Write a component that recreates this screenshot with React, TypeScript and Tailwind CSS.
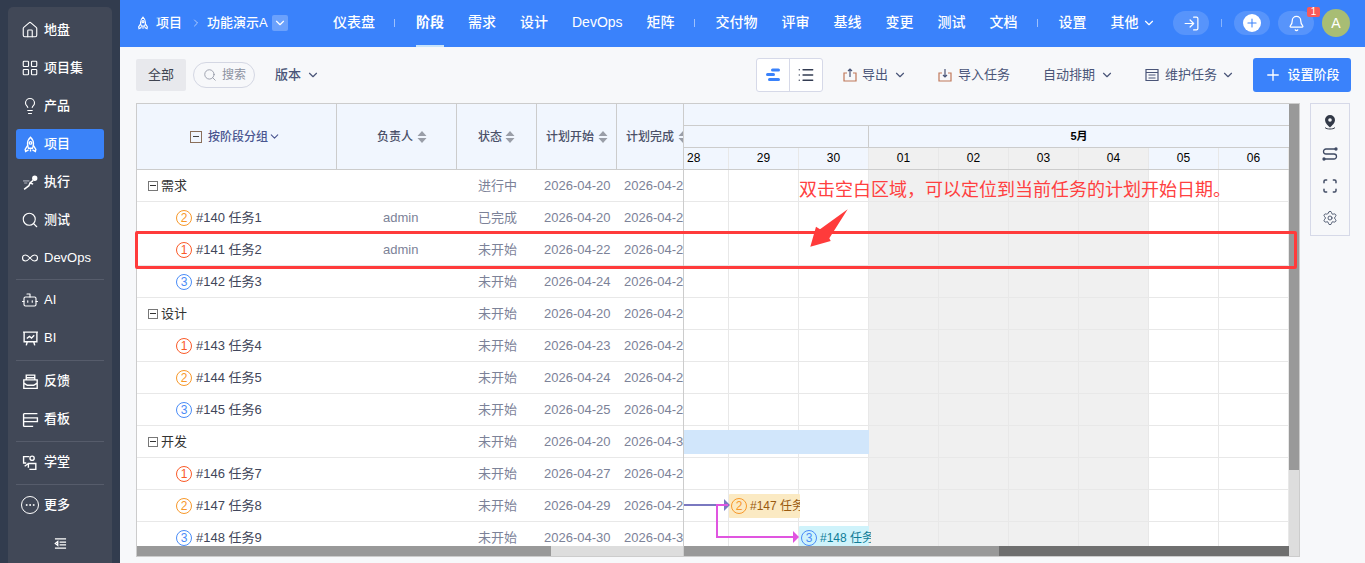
import React from 'react'
import {
  Bell,
  Bot,
  ChevronDown,
  ChevronRight,
  Ellipsis,
  Home,
  Infinity as InfinityIcon,
  LayoutGrid,
  Lightbulb,
  List,
  LogIn,
  Plus,
  Scan,
  Search,
  Settings,
} from 'lucide-react'

const Rocket = ({ className = 'h-[17px] w-[17px]' }: { className?: string }) => (
  <svg viewBox="0 0 16 16" fill="none" stroke="currentColor" strokeWidth="1.3" className={className}>
    <path d="M8 1.2c2 1.8 2.8 4 2.8 6.2 0 1.6-.4 3-.9 4.1H6.100c-.5-1.100-.9-2.500-.9-4.100C5.200 5.200 6 3 8 1.200z" />
    <circle cx="8" cy="6.500" r="1.200" />
    <path d="M5.500 8.500 3 12.500l.4 2 2.800-1.500M10.500 8.500l2.500 4-.4 2-2.800-1.500M8 12.500v2" />
  </svg>
)

const Runner = () => (
  <svg viewBox="0 0 16 16" fill="none" stroke="currentColor" strokeWidth="1.4" className="h-[17px] w-[17px]">
    <circle cx="12" cy="4" r="1.800" fill="currentColor" />
    <path d="M2 14.500 6.500 11l1-2.500 3-2.500M7.500 8.500l3 1" />
    <path d="M1 6.500h6M2 8.500h3" stroke="#8a8f9c" strokeWidth="1.500" />
  </svg>
)

const Feedback = () => (
  <svg viewBox="0 0 16 16" fill="none" stroke="currentColor" strokeWidth="1.300" className="h-[17px] w-[17px]">
    <path d="M4 6V2h8v4M1.700 6.500h12.600v8H1.700zM4.500 4.500h7M1.700 9.500 5 11.500h6l3.300-2" />
  </svg>
)

const Board = () => (
  <svg viewBox="0 0 16 16" fill="none" stroke="currentColor" strokeWidth="1.300" className="h-[17px] w-[17px]">
    <path d="M1.500 2.500h13M1.500 2.500v12M1.500 6.500h13v3.500h-13M1.500 14.500h9" />
  </svg>
)

const School = () => (
  <svg viewBox="0 0 16 16" fill="none" stroke="currentColor" strokeWidth="1.300" className="h-[17px] w-[17px]">
    <circle cx="9.500" cy="4" r="2" />
    <path d="M7 2.500H1.500v6H4M6 13V9h7v5.500H7M2.500 11.500 6 9" />
  </svg>
)

const Screen = () => (
  <svg viewBox="0 0 16 16" fill="none" stroke="currentColor" strokeWidth="1.300" className="h-[17px] w-[17px]">
    <path d="M1 2h14M2 2v9h12V2M5 11l-1 3.500M11 11l1 3.500M4.500 8 7 6l2 1.500L11.500 5" />
  </svg>
)

type NavItem = { label: string; icon: React.ReactNode; active?: boolean }

const navGroups: NavItem[][] = [
  [
    { label: '地盘', icon: <Home size={18} strokeWidth={1.5} /> },
    { label: '项目集', icon: <LayoutGrid size={18} strokeWidth={1.5} /> },
    { label: '产品', icon: <Lightbulb size={18} strokeWidth={1.5} /> },
    { label: '项目', icon: <Rocket />, active: true },
    { label: '执行', icon: <Runner /> },
    { label: '测试', icon: <Search size={18} strokeWidth={1.5} /> },
    { label: 'DevOps', icon: <InfinityIcon size={18} strokeWidth={1.5} /> },
  ],
  [
    { label: 'AI', icon: <Bot size={18} strokeWidth={1.5} /> },
    { label: 'BI', icon: <Screen /> },
  ],
  [
    { label: '反馈', icon: <Feedback /> },
    { label: '看板', icon: <Board /> },
  ],
  [{ label: '学堂', icon: <School /> }],
]

function Sidebar() {
  return (
    <aside className="h-full w-[120px] shrink-0 bg-[#323c4e] pl-2 pr-2 pt-[7px]">
      <div className="flex h-full flex-col rounded-t-[5px] bg-[#414857] px-2 pt-2 text-white">
        {navGroups.map((group, i) => (
          <React.Fragment key={i}>
            <div className="flex flex-col gap-2">
              {group.map(item => (
                <div
                  key={item.label}
                  className={`flex h-[30px] items-center gap-[5px] rounded-[3px] pl-[5px] text-[13px] font-medium ${item.active ? 'bg-[#3a82f8]' : ''}`}
                >
                  <span className="flex w-[18px] justify-center">{item.icon}</span>
                  <span>{item.label}</span>
                </div>
              ))}
            </div>
            <div className={`mb-[5px] h-px bg-[#565c6b] ${i === 0 ? 'mt-[6px]' : 'mt-[7px]'}`} />
          </React.Fragment>
        ))}
        <div className="flex h-[30px] items-center gap-[5px] pl-[5px] text-[13px] font-medium">
          <span className="flex h-[18px] w-[18px] items-center justify-center rounded-full border border-white">
            <Ellipsis size={12} />
          </span>
          <span>更多</span>
        </div>
        <div className="mt-[8px] flex h-[30px] items-center justify-center">
          <svg viewBox="0 0 14 14" fill="none" stroke="currentColor" strokeWidth="1.500" className="h-[13px] w-[13px]">
            <path d="M1 2h12M6 5.500h7M6 8.500h7M1 12h12M4 5 1.500 7 4 9z" />
          </svg>
        </div>
      </div>
    </aside>
  )
}

type TopItem = { label: string; active?: boolean } | 'sep'

const topItems: TopItem[] = [
  { label: '仪表盘' },
  'sep',
  { label: '阶段', active: true },
  { label: '需求' },
  { label: '设计' },
  { label: 'DevOps' },
  { label: '矩阵' },
  'sep',
  { label: '交付物' },
  { label: '评审' },
  { label: '基线' },
  { label: '变更' },
  { label: '测试' },
  { label: '文档' },
  'sep',
  { label: '设置' },
]

function TopBar() {
  return (
    <header className="flex h-[47px] shrink-0 items-center bg-[#3a82fb] text-white">
      <div className="flex w-[213px] shrink-0 items-center pb-[1px] pl-[16px] text-[13px] font-medium">
        <Rocket className="h-[14px] w-[14px]" />
        <span className="ml-[6px]">项目</span>
        <ChevronRight size={12} strokeWidth={2} className="ml-[8px] text-white/60" />
        <span className="ml-[5px]">功能演示A</span>
        <span className="ml-[4px] flex h-4 w-4 items-center justify-center rounded-[2px] bg-white/25">
          <ChevronDown size={14} />
        </span>
      </div>
      <nav className="flex h-full items-center gap-[24px] text-[14px] font-medium">
        {topItems.map((item, i) =>
          item === 'sep' ? (
            <span key={i} className="-ml-[5px] -mr-[3px] mb-[2px] h-[8px] w-px bg-white/50" />
          ) : (
            <span key={item.label} className={`relative flex h-full items-center pb-[2px] ${item.active ? 'font-bold' : ''}`}>
              {item.label}
              {item.active && <span className="absolute bottom-0 left-0 right-0 h-[2px] bg-[#c8e4fa]" />}
            </span>
          ),
        )}
        <span className="flex items-center gap-[3px] pb-[2px]">
          其他
          <ChevronDown size={14} />
        </span>
      </nav>
      <div className="ml-auto flex items-center pb-[1px] pr-[15px]">
        <span className="flex h-6 w-9 items-center justify-center rounded-full bg-white/15">
          <LogIn size={17} strokeWidth={1.7} />
        </span>
        <span className="ml-[12px] h-[8px] w-px bg-white/40" />
        <span className="ml-[12px] flex h-6 w-9 items-center justify-center rounded-full bg-white/15">
          <span className="flex h-[18px] w-[18px] items-center justify-center rounded-full bg-white text-[#3a82fb]">
            <Plus size={14} strokeWidth={1.8} />
          </span>
        </span>
        <span className="relative ml-[8px] flex h-6 w-9 items-center justify-center rounded-full bg-white/15">
          <Bell size={17} strokeWidth={1.8} />
          <span className="absolute -top-[4px] right-[-6px] flex h-[10px] w-[13px] items-center justify-center rounded-[2px] bg-[#f85a5a] text-[10px] leading-none">
            1
          </span>
        </span>
        <span className="ml-[8px] flex h-7 w-7 items-center justify-center rounded-full bg-[#a8bd74] text-[14px]">
          A
        </span>
      </div>
    </header>
  )
}

const BoxIcon = ({ up }: { up?: boolean }) => (
  <svg viewBox="0 0 14 14" fill="none" strokeWidth="1.200" className="h-[14px] w-[14px]">
    <path d="M4 5H1v8h12V5h-3" stroke="#c0785a" />
    <path d={up ? 'M7 9V1M5 3l2-2 2 2' : 'M7 1v8M5 7l2 2 2-2'} stroke="#4a5578" />
  </svg>
)

function ToolBar() {
  return (
    <div className="flex h-[34px] shrink-0 items-center text-[13px] text-[#4a5578]">
      <span className="flex h-8 w-[50px] items-center justify-center rounded-[2px] bg-[#e8e9ed] text-[#3f4450]">全部</span>
      <span className="ml-[7px] flex h-[26px] w-[62px] items-center gap-[5px] rounded-full border border-[#d4d7e3] pl-[9px] text-[12px] text-[#8d92a1]">
        <Search size={14} strokeWidth={1.4} />
        搜索
      </span>
      <span className="ml-[20px] font-medium">版本</span>
      <ChevronDown size={14} className="ml-[5px]" />

      <span className="ml-auto flex h-[34px] w-[67px] rounded-[3px] border border-[#d6d9e8] bg-white">
        <span className="flex w-[33px] items-center justify-center border-r border-[#d6d9e8]">
          <svg viewBox="0 0 16 14" className="h-[14px] w-4" fill="#3a82fb">
            <rect x="6" y="0.500" width="9" height="3" rx="1.500" />
            <rect x="1" y="5" width="9" height="3" rx="1.500" />
            <rect x="3" y="10" width="12" height="3" rx="1.500" />
          </svg>
        </span>
        <span className="flex flex-1 items-center justify-center text-[#333c52]">
          <List size={18} strokeWidth={1.7} />
        </span>
      </span>
      <span className="ml-[20px] flex items-center">
        <BoxIcon up />
        <span className="ml-[5px]">导出</span>
        <ChevronDown size={14} className="ml-[5px]" />
      </span>
      <span className="ml-[31px] flex items-center">
        <BoxIcon />
        <span className="ml-[6px]">导入任务</span>
      </span>
      <span className="ml-[33px] flex items-center">
        自动排期
        <ChevronDown size={14} className="ml-[5px]" />
      </span>
      <span className="ml-[31px] flex items-center">
        <svg viewBox="0 0 14 14" fill="none" stroke="currentColor" strokeWidth="1.200" className="h-[14px] w-[14px]">
          <path d="M1 1.500h12v11H1zM1 4.500h12M3.500 7h7M3.500 10h7" />
        </svg>
        <span className="ml-[6px]">维护任务</span>
        <ChevronDown size={14} className="ml-[4px]" />
      </span>
      <span className="ml-[18px] flex h-[34px] w-[98px] items-center justify-center gap-[5px] rounded-[3px] bg-[#3a82fb] font-medium text-white">
        <Plus size={18} strokeWidth={1.8} />
        设置阶段
      </span>
    </div>
  )
}

type Row = {
  group?: boolean
  name: string
  pri?: 1 | 2 | 3
  owner?: string
  status: string
  start: string
  end: string
}

// the 计划完成 column is cut at the gantt edge, so only the part on screen is listed
const rows: Row[] = [
  { group: true, name: '需求', status: '进行中', start: '2026-04-20', end: '2026-04-2' },
  { name: '#140 任务1', pri: 2, owner: 'admin', status: '已完成', start: '2026-04-20', end: '2026-04-2' },
  { name: '#141 任务2', pri: 1, owner: 'admin', status: '未开始', start: '2026-04-22', end: '2026-04-2' },
  { name: '#142 任务3', pri: 3, status: '未开始', start: '2026-04-24', end: '2026-04-2' },
  { group: true, name: '设计', status: '未开始', start: '2026-04-20', end: '2026-04-2' },
  { name: '#143 任务4', pri: 1, status: '未开始', start: '2026-04-23', end: '2026-04-2' },
  { name: '#144 任务5', pri: 2, status: '未开始', start: '2026-04-24', end: '2026-04-2' },
  { name: '#145 任务6', pri: 3, status: '未开始', start: '2026-04-25', end: '2026-04-2' },
  { group: true, name: '开发', status: '未开始', start: '2026-04-20', end: '2026-04-3' },
  { name: '#146 任务7', pri: 1, status: '未开始', start: '2026-04-27', end: '2026-04-2' },
  { name: '#147 任务8', pri: 2, status: '未开始', start: '2026-04-29', end: '2026-04-2' },
  { name: '#148 任务9', pri: 3, status: '未开始', start: '2026-04-30', end: '2026-04-3' },
]

function Priority({ level }: { level: 1 | 2 | 3 }) {
  const color = level === 1 ? 'border-[#fa5a28] text-[#fa5a28]' : level === 2 ? 'border-[#f7982a] text-[#f7982a]' : 'border-[#4a8cf7] text-[#4a8cf7]'
  return (
    <span className={`flex h-4 w-4 shrink-0 items-center justify-center rounded-full border text-[12px] leading-none ${color}`}>
      {level}
    </span>
  )
}

const SortIcon = () => (
  <svg viewBox="0 0 10 14" className="h-[14px] w-[10px] shrink-0" fill="#9a9ea8">
    <path d="M5 1 9.500 6H.500zM5 13 .500 8h9z" />
  </svg>
)

const Toggle = () => (
  <span className="flex h-[10px] w-[10px] shrink-0 items-center justify-center border border-[#777] bg-white">
    <span className="h-px w-[6px] bg-[#333]" />
  </span>
)

function LeftTable() {
  return (
    <div className="w-[547px] shrink-0 border-r border-[#ccc]">
      <div className="flex h-[66px] border-b border-[#ccc] bg-[#f1f6fe] text-[12px] font-medium text-[#4a5068]">
        <div className="flex w-[200px] items-center border-r border-[#ccc] pl-[53px] text-[#4a5590]">
          <span className="flex h-3 w-3 items-center justify-center border border-[#8a6f5a]">
            <span className="h-px w-[6px] bg-[#444]" />
          </span>
          <span className="ml-[6px]">按阶段分组</span>
          <ChevronDown size={13} />
        </div>
        <div className="flex w-[120px] items-center border-r border-[#ccc] pl-[40px]">
          负责人
          <span className="ml-[4px]"><SortIcon /></span>
        </div>
        <div className="flex w-[80px] items-center border-r border-[#ccc] pl-[21px]">
          状态
          <span className="ml-[3px]"><SortIcon /></span>
        </div>
        <div className="flex w-[80px] items-center border-r border-[#ccc] pl-[9px]">
          计划开始
          <span className="ml-[4px]"><SortIcon /></span>
        </div>
        <div className="flex w-[66px] items-center overflow-hidden pl-[9px]">
          <span className="shrink-0">计划完成</span>
          <span className="ml-[4px]"><SortIcon /></span>
        </div>
      </div>
      {rows.map(row => (
        <div key={row.name} className="flex h-8 items-center border-b border-[#e8e8e8] text-[13px] text-[#7c8298]">
          <div className="flex w-[200px] items-center text-[#41465a]">
            {row.group ? (
              <span className="flex items-center gap-[3px] pl-[11px] text-[#333]">
                <Toggle />
                {row.name}
              </span>
            ) : (
              <span className="flex items-center gap-[4px] pl-[39px]">
                {row.pri && <Priority level={row.pri} />}
                {row.name}
              </span>
            )}
          </div>
          <div className="w-[120px] pl-[46px]">{row.owner}</div>
          <div className="w-[80px] pl-[21px]">{row.status}</div>
          <div className="w-[80px] pl-[7px]">{row.start}</div>
          <div className="w-[66px] whitespace-nowrap pl-[7px]">{row.end}</div>
        </div>
      ))}
    </div>
  )
}

const days = ['28', '29', '30', '01', '02', '03', '04', '05', '06']
const isOff = (d: string) => ['01', '02', '03', '04'].includes(d)

function Gantt() {
  return (
    <div className="relative w-[605px] shrink-0 overflow-hidden">
      <div className="h-[22px] border-b border-[#ccc] bg-[#f1f6fe]" />
      <div className="flex h-[22px] border-b border-[#ccc] bg-[#f1f6fe]">
        <div className="w-[185px] border-r border-[#ccc]" />
        <div className="flex-1 text-center text-[11px] font-bold leading-[21px] text-black">5月</div>
      </div>
      <div className="flex h-[22px] border-b border-[#ccc] text-[12px] leading-[21px] text-black">
        {days.map((d, i) => (
          <div
            key={d}
            className={`shrink-0 border-r border-[#e8e8e8] ${i === 0 ? 'w-[45px] pl-[3px]' : 'w-[70px] text-center'} ${isOff(d) ? 'bg-[#f0f0f0]' : 'bg-[#f1f6fe]'}`}
          >
            {d}
          </div>
        ))}
      </div>
      {rows.map(row => (
        <div key={row.name} className="flex h-8">
          {days.map((d, i) => (
            <div
              key={d}
              className={`shrink-0 border-b border-r border-[#e8e8e8] ${i === 0 ? 'w-[45px]' : 'w-[70px]'} ${isOff(d) ? 'bg-[#f0f0f0]' : 'bg-white'}`}
            />
          ))}
        </div>
      ))}

      {/* bars sit over the day grid */}
      <div className="absolute left-0 top-[326px] h-6 w-[185px] bg-[#d1e6fb]" />
      <div className="absolute left-[45px] top-[390px] flex h-6 w-[71px] items-center gap-[3px] overflow-hidden whitespace-nowrap rounded-[1px] bg-[#fbeac3] pl-[2px] text-[12px] text-[#9a5a10]">
        <Priority level={2} />
        #147 任务8
      </div>
      <div className="absolute left-[115px] top-[422px] flex h-6 w-[72px] items-center gap-[3px] overflow-hidden whitespace-nowrap rounded-[1px] pl-[2px] text-[12px] text-[#0f7d98]">
        <span className="absolute inset-y-0 left-0 w-[70px] bg-[#cff3fb]" />
        <span className="relative"><Priority level={3} /></span>
        <span className="relative">#148 任务9</span>
      </div>
      <svg className="absolute left-0 top-[390px] h-[60px] w-[120px]" viewBox="0 0 120 60" fill="none">
        <path d="M0 11h40" stroke="#7a78c0" strokeWidth="2" />
        <path d="M40 5l6 6-6 6z" fill="#7a78c0" />
        <path d="M44 11H33v32h77" stroke="#e055e0" strokeWidth="2" />
        <path d="M109 37l6 6-6 6z" fill="#e055e0" />
      </svg>
    </div>
  )
}

function Scrollbars() {
  return (
    <div className="flex h-[10px] shrink-0">
      <div className="flex w-[547px] shrink-0 border-r border-[#ccc] bg-[#ddd]">
        <div className="w-[414px] bg-[#999]" />
      </div>
      <div className="flex w-[605px] shrink-0 bg-[#999]">
        <div className="ml-[315px] flex-1 bg-[#6f6f6f]" />
      </div>
      <div className="flex-1 bg-[#ddd]" />
    </div>
  )
}

function SideTools() {
  return (
    <div className="ml-[10px] flex h-[133px] w-[40px] shrink-0 flex-col items-center gap-[16px] border border-[#d6d9e8] pt-[10px] text-[#3f4a63]">
      <svg viewBox="0 0 16 16" className="h-4 w-4" fill="#333a48">
        <path d="M8 1a5 5 0 0 0-5 5c0 3 3 5.500 5 7.500 2-2 5-4.500 5-7.500a5 5 0 0 0-5-5z" />
        <circle cx="8" cy="6" r="1.800" fill="#f7f8fa" />
        <path d="M3 13.500c1 1.200 3 1.500 5 1.500s4-.3 5-1.500" stroke="#333a48" fill="none" />
      </svg>
      <svg viewBox="0 0 16 16" className="h-4 w-4" fill="none" stroke="currentColor" strokeWidth="1.300">
        <path d="M14 3H4a2.500 2.500 0 0 0 0 5h8a2.500 2.500 0 0 1 0 5H2" />
        <circle cx="14" cy="3" r="1" fill="currentColor" />
        <circle cx="2" cy="13" r="1" fill="currentColor" />
      </svg>
      <Scan size={16} strokeWidth={2.2} />
      <Settings size={16} strokeWidth={1.3} />
    </div>
  )
}

export default function App() {
  return (
    <div className="relative flex h-[563px] w-[1365px] overflow-hidden bg-[#f7f8fa] font-['Liberation_Sans','Noto_Sans_CJK_SC',sans-serif]">
      <Sidebar />
      <main className="flex min-w-0 flex-1 flex-col">
        <TopBar />
        <div className="flex min-h-0 flex-1 flex-col pb-[6px] pl-4 pr-[14px] pt-[11px]">
          <ToolBar />
          <div className="mt-[11px] flex min-h-0 flex-1">
            <div className="flex w-[1164px] shrink-0 flex-col border border-[#ccc] bg-white">
              <div className="flex min-h-0 flex-1 overflow-hidden">
                <LeftTable />
                <Gantt />
                <div className="flex flex-1 flex-col bg-[#ddd]">
                  <div className="h-[366px] bg-[#999]" />
                </div>
              </div>
              <Scrollbars />
            </div>
            <SideTools />
          </div>
        </div>
      </main>

      {/* annotation layered over the page */}
      <div className="absolute left-[135px] top-[231px] h-[38px] w-[1162px] rounded-[2px] border-[3px] border-[#ff3b3b]" />
      <div className="absolute left-[799px] top-[178px] whitespace-nowrap text-[18px] leading-[24px] text-[#ff4040]">
        双击空白区域，可以定位到当前任务的计划开始日期。
      </div>
      <svg className="absolute left-[805px] top-[205px] h-[46px] w-[46px]" viewBox="805 205 46 46">
        <path d="M847.700 209.300 829.300 238.300l1.400 2.700-20.400 5.700 5.700-20 4 2.600z" fill="#ff3b3b" />
      </svg>
    </div>
  )
}
